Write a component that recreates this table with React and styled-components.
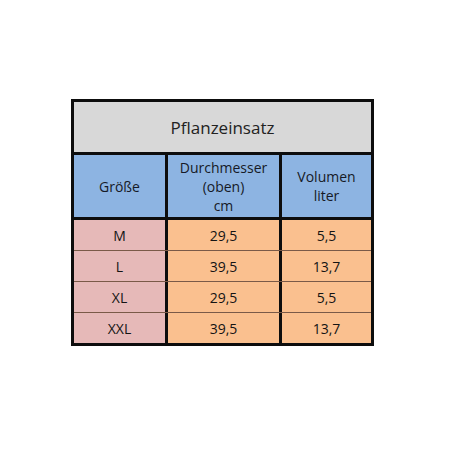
import React from 'react'
import styled, { createGlobalStyle } from 'styled-components'

const rows = [
  ['M', '29,5', '5,5'],
  ['L', '39,5', '13,7'],
  ['XL', '29,5', '5,5'],
  ['XXL', '39,5', '13,7']
]

export default function App() {
  return (
    <Page>
      <GlobalStyle />
      <Table>
        <Title>Pflanzeinsatz</Title>
        <Row>
          <Head>Größe</Head>
          <Head divider>Durchmesser<br />(oben)<br />cm</Head>
          <Head divider>Volumen<br />liter</Head>
        </Row>
        <Body>
          {rows.map((r, i) => (
            <Row key={r[0]} first={i === 0} data>
              <Cell size>{r[0]}</Cell>
              <Cell divider>{r[1]}</Cell>
              <Cell divider>{r[2]}</Cell>
            </Row>
          ))}
        </Body>
      </Table>
    </Page>
  )
}

const GlobalStyle = createGlobalStyle`
  html, body {
    margin: 0;
    background: #fff;
    font-family: "Open Sans", "DejaVu Sans", sans-serif;
  }
`,
Page = styled.div`
  width: 452px;
  height: 452px;
  padding: 99px 0 0 71px;
  box-sizing: border-box;
`,
Table = styled.div`
  width: 303px;
  box-sizing: border-box;
  border: 3px solid #0d0d0d;
  display: flex;
  flex-direction: column;
`,
Title = styled.div`
  height: 50px;
  background: #d8d8d8;
  border-bottom: 3px solid #0d0d0d;
  display: flex;
  align-items: center;
  justify-content: center;
  font-size: 17px;
  color: #222;
`,
Body = styled.div`
  border-top: 3px solid #0d0d0d;
  display: flex;
  flex-direction: column;
`,
Row = styled.div`
  display: grid;
  grid-template-columns: 91px 114px 92px;
  height: ${p => p.data ? (p.first ? '30px' : '31px') : '62px'};
  box-sizing: border-box;
  border-top: ${p => p.data && !p.first ? '1px solid #7a5a48' : 'none'};
`,
Head = styled.div`
  background: #8db4e2;
  border-left: ${p => p.divider ? '3px solid #0d0d0d' : 'none'};
  display: flex;
  align-items: center;
  justify-content: center;
  text-align: center;
  font-size: 14px;
  line-height: 19px;
  color: #161a26;
`,
Cell = styled.div`
  background: ${p => p.size ? '#e6b9b8' : '#fac08f'};
  border-left: ${p => p.divider ? '3px solid #0d0d0d' : 'none'};
  display: flex;
  align-items: center;
  justify-content: center;
  font-size: 14px;
  color: #141414;
`
